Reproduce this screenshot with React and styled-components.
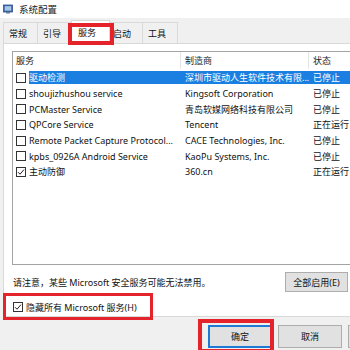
import React from "react"
import styled, { createGlobalStyle } from "styled-components"

const GlobalStyle = createGlobalStyle`
  html, body {
    margin: 0;
    padding: 0;
    width: 350px;
    height: 350px;
    overflow: hidden;
    background: #fff;
  }
  body {
    font-family: "Noto Sans", "Noto Sans CJK SC", sans-serif;
  }
`

const Window = styled.div`
  width: 490px;
  height: 350px;
  display: flex;
  flex-direction: column;
  background: #f0f0f0;
  font-size: 9px;
  color: #111;
`

const TitleBar = styled.div`
  height: 18px;
  flex: none;
  background: #fff;
  display: flex;
  align-items: center;
  gap: 6px;
  padding-left: 3px;
  font-size: 9.5px;
  color: #222;
`

const TabStrip = styled.ul`
  list-style: none;
  margin: 0;
  padding: 0 0 0 3px;
  height: 25px;
  flex: none;
  display: flex;
  align-items: flex-end;
`

const Tab = styled.li`
  position: relative;
  box-sizing: border-box;
  width: ${p => (p.$active ? 39 : 35)}px;
  height: ${p => (p.$active ? 24 : 21)}px;
  margin: 0 ${p => (p.$active ? -2 : 0)}px ${p => (p.$active ? -1 : 0)}px;
  padding-left: ${p => (p.$active ? 6 : 5)}px;
  display: flex;
  align-items: center;
  background: ${p => (p.$active ? "#fff" : "#f0f0f0")};
  border: 1px solid #d9d9d9;
  border-bottom: none;
  border-left-width: ${p => (p.$active || p.$first ? 1 : 0)}px;
  z-index: ${p => (p.$active ? 2 : 1)};
  padding-top: ${p => (p.$active ? 0 : 1)}px;

  ${p =>
    p.$active &&
    `
    &::after {
      content: "";
      position: absolute;
      top: 2px;
      left: -4px;
      right: -5px;
      bottom: -1px;
      border: 4px solid #e5232b;
      pointer-events: none;
    }
  `}
`

const TabPage = styled.div`
  flex: 1;
  margin: 0 4px 0 3px;
  padding: 7px 8px 0;
  background: #fff;
  border: 1px solid #d9d9d9;
  display: flex;
  flex-direction: column;
`

const ListBox = styled.div`
  height: 212px;
  border: 1px solid #a3a3a3;
  background: #fff;
  flex: none;
`

const HeaderRow = styled.div`
  display: grid;
  grid-template-columns: 168px 128px 1fr;
  height: 17px;
`

const HeaderCell = styled.div`
  display: flex;
  align-items: center;
  padding-left: ${p => (p.$first ? 3 : 4)}px;
  border-right: 1px solid #e5e5e5;
  color: #222;
`

const Rows = styled.div`
  padding-top: 1px;
`

const Row = styled.div`
  display: grid;
  grid-template-columns: 168px 128px 1fr;
  height: 15.7px;
  align-items: center;
`

const NameCell = styled.div`
  display: flex;
  align-items: center;
  gap: 3px;
  padding-left: 3px;
`

const CellText = styled.span`
  flex: 1;
  height: 13px;
  line-height: 13px;
  padding-left: ${p => (p.$pad ? 4 : 0)}px;
  white-space: nowrap;
  overflow: hidden;
  background: ${p => (p.$selected ? "#1a7fe0" : "transparent")};
  color: ${p => (p.$selected ? "#fff" : "#111")};
`

const Cell = styled.div`
  display: flex;
`

const Box = styled.span`
  box-sizing: border-box;
  width: 10px;
  height: 10px;
  flex: none;
  border: 1px solid #333;
  background: #fff;
  display: flex;
  align-items: center;
  justify-content: center;
`

const NoteRow = styled.div`
  display: flex;
  align-items: center;
  height: 20px;
  margin-top: 7px;
  padding-left: 1px;
`

const Note = styled.span`
  flex: 1;
  color: #111;
`

const ButtonGroup = styled.div`
  display: flex;
  gap: 8px;
  margin-right: 58px;
`

const Button = styled.button`
  box-sizing: border-box;
  width: ${p => p.$w || 64}px;
  height: ${p => p.$h || 23}px;
  padding: 0;
  font: inherit;
  color: #111;
  background: #e1e1e1;
  border: 1px solid ${p => (p.$default ? "#1f7ad6" : "#adadad")};
  box-shadow: ${p => (p.$default ? "inset 0 0 0 1px #1f7ad6" : "none")};
  position: relative;

  ${p =>
    p.$marked &&
    `
    &::after {
      content: "";
      position: absolute;
      top: -7px;
      left: -11px;
      right: -3px;
      bottom: -6px;
      border: 4px solid #e5232b;
      pointer-events: none;
    }
  `}
`

const HideRow = styled.label`
  position: relative;
  align-self: flex-start;
  display: inline-flex;
  align-items: center;
  gap: 3px;
  height: 12px;
  margin-top: 9px;
  padding-left: 1px;

  &::after {
    content: "";
    position: absolute;
    top: -8px;
    left: -9px;
    right: -16px;
    bottom: -7px;
    border: 3px solid #e5232b;
    pointer-events: none;
  }
`

const BottomBar = styled.div`
  height: 33px;
  flex: none;
  display: flex;
  justify-content: flex-end;
  align-items: flex-start;
  gap: 6px;
  padding: 8px 8px 0 0;
  box-sizing: border-box;
`

const Check = ({ checked }) => (
  <Box>
    {checked && (
      <svg width="8" height="8" viewBox="0 0 8 8">
        <path d="M1 4.2 L3 6.2 L7 1.6" fill="none" stroke="#222" strokeWidth="1" />
      </svg>
    )}
  </Box>
)

const AppIcon = () => (
  <svg width="10" height="10" viewBox="0 0 10 10">
    <rect x="0.5" y="1" width="9" height="7" fill="#3f6fae" stroke="#2c4f80" strokeWidth="0.8" />
    <rect x="1.8" y="2.2" width="6.4" height="4.4" fill="#a9c6ea" />
    <rect x="3" y="8" width="4" height="1.5" fill="#6b7f99" />
  </svg>
)

const services = [
  { name: "驱动检测", maker: "深圳市驱动人生软件技术有限...", status: "已停止", selected: true },
  { name: "shoujizhushou service", maker: "Kingsoft Corporation", status: "已停止" },
  { name: "PCMaster Service", maker: "青岛软媒网络科技有限公司", status: "已停止" },
  { name: "QPCore Service", maker: "Tencent", status: "正在运行" },
  { name: "Remote Packet Capture Protocol...", maker: "CACE Technologies, Inc.", status: "已停止" },
  { name: "kpbs_0926A Android Service", maker: "KaoPu Systems, Inc.", status: "已停止" },
  { name: "主动防御", maker: "360.cn", status: "正在运行", checked: true },
]

const tabs = ["常规", "引导", "服务", "启动", "工具"]

const App = () => (
  <>
    <GlobalStyle />
    <Window>
      <TitleBar>
        <AppIcon />
        <span>系统配置</span>
      </TitleBar>

      <TabStrip>
        {tabs.map((t, i) => (
          <Tab key={t} $first={i === 0} $active={t === "服务"}>
            {t}
          </Tab>
        ))}
      </TabStrip>

      <TabPage>
        <ListBox>
          <HeaderRow>
            <HeaderCell $first>服务</HeaderCell>
            <HeaderCell>制造商</HeaderCell>
            <HeaderCell>状态</HeaderCell>
          </HeaderRow>
          <Rows>
            {services.map(s => (
              <Row key={s.name}>
                <NameCell>
                  <Check checked={s.checked} />
                  <CellText $selected={s.selected}>{s.name}</CellText>
                </NameCell>
                <Cell>
                  <CellText $pad $selected={s.selected}>{s.maker}</CellText>
                </Cell>
                <Cell>
                  <CellText $pad $selected={s.selected}>{s.status}</CellText>
                </Cell>
              </Row>
            ))}
          </Rows>
        </ListBox>

        <NoteRow>
          <Note>请注意，某些 Microsoft 安全服务可能无法禁用。</Note>
          <ButtonGroup>
            <Button $w={63} $h={20}>全部启用(E)</Button>
            <Button $w={63} $h={20}>全部禁用(D)</Button>
          </ButtonGroup>
        </NoteRow>

        <HideRow>
          <Check checked />
          <span>隐藏所有 Microsoft 服务(H)</span>
        </HideRow>
      </TabPage>

      <BottomBar>
        <Button $default $marked>确定</Button>
        <Button>取消</Button>
        <Button>应用(A)</Button>
        <Button>帮助</Button>
      </BottomBar>
    </Window>
  </>
)

export default App
